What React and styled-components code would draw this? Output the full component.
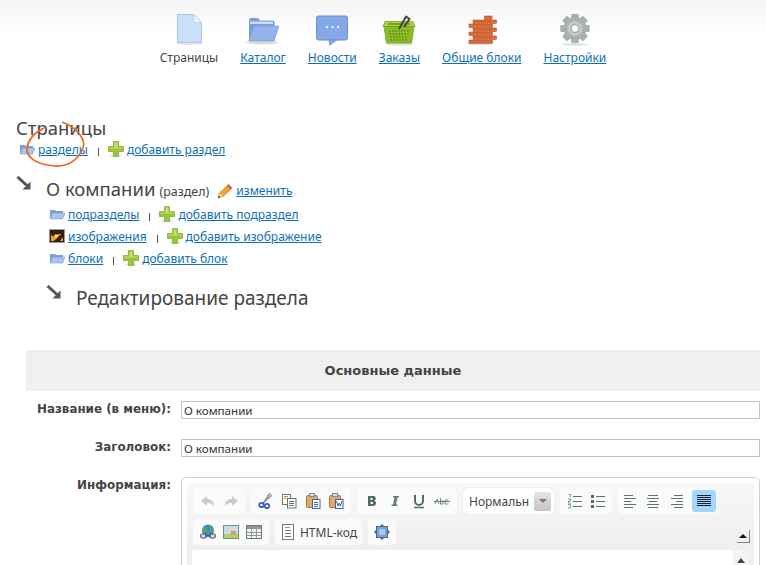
import React from 'react'
import styled, { createGlobalStyle } from 'styled-components'

const Global = createGlobalStyle`
html, body {
  margin: 0;
  padding: 0;
  background: #fff;
  height: 565px;
  overflow: hidden;
}
body {
  font-family: "Noto Sans", "Liberation Sans", sans-serif;
  font-size: 12px;
  color: #444;
}
a {
  color: #0d6fb8;
  text-decoration: underline;
}
`

const Page = styled.div`
position: relative;
width: 766px;
height: 565px;
overflow: hidden;
`

const Nav = styled.nav`
display: flex;
justify-content: center;
gap: 22px;
height: 118px;
padding-top: 12px;
box-sizing: border-box;
background: linear-gradient(#f3f3f3 0, #fff 30px);
`

const NavItem = styled.div`
display: flex;
flex-direction: column;
align-items: center;
gap: 3px;
`

const NavIcon = styled.svg`
width: 34px;
height: 34px;
`

const NavLabel = styled.a`
font-size: 12px;
line-height: 17px;
white-space: nowrap;
color: ${p => (p.$active ? '#444' : '#0d6fb8')};
text-decoration: ${p => (p.$active ? 'none' : 'underline')};
`

const Content = styled.main`
padding-left: 16px;
`

const Title = styled.h1`
margin: 0;
font-size: 18.5px;
font-weight: normal;
line-height: 20px;
color: #444;
`

const LinkRow = styled.div`
display: flex;
align-items: center;
height: 22px;
margin-left: ${p => p.$indent || 0}px;
`

const Sep = styled.span`
width: 1px;
height: 8px;
margin: 6px 9px 0 10px;
background: #456;
`

const RowIcon = styled.svg`
width: 16px;
height: 16px;
margin-right: 3px;
flex: none;
`

const PlusIcon = styled(RowIcon)`
margin-right: 3px;
`

const TreeHead = styled.div`
display: flex;
align-items: flex-start;
margin-left: ${p => p.$indent || 0}px;
margin-top: ${p => p.$top || 0}px;
`

const Arrow = styled.svg`
width: 16px;
height: 14px;
margin-right: 14px;
flex: none;
`

const HeadText = styled.h2`
margin: 3px 0 0;
font-size: ${p => p.$size}px;
font-weight: normal;
line-height: 20px;
color: #444;
white-space: nowrap;
`

const Small = styled.span`
font-size: 12.5px;
margin-left: 4px;
`

const Edit = styled.span`
display: inline-flex;
align-items: center;
font-size: 12px;
margin-left: 8px;
vertical-align: -3px;
`

const RowsBlock = styled.div`
margin-top: 1px;
`

const Form = styled.section`
margin: 42px 6px 0 10px;
`

const FormHead = styled.div`
height: 41px;
line-height: 41px;
background: #f0f0f0;
text-align: center;
font-family: "DejaVu Sans", sans-serif;
font-weight: bold;
font-size: 13px;
color: #444;
`

const FieldRow = styled.div`
display: grid;
grid-template-columns: 145px 1fr;
column-gap: 10px;
margin-top: ${p => p.$top}px;
`

const Label = styled.label`
text-align: right;
font-family: "DejaVu Sans", sans-serif;
font-weight: bold;
font-size: 11.9px;
line-height: 17px;
color: #444;
white-space: nowrap;
`

const Input = styled.div`
height: 18px;
box-sizing: border-box;
border: 1px solid #c4c4c4;
padding-left: 2px;
line-height: 18px;
font-size: 11.6px;
color: #333;
`

const Editor = styled.div`
position: relative;
height: 200px;
box-sizing: border-box;
border: 1px solid #d0d0d0;
border-radius: 5px;
padding: 5px;
`

const Toolbox = styled.div`
height: 67px;
box-sizing: border-box;
padding: 5px 6px 0;
background: linear-gradient(#f7f7f7, #efefef);
border-radius: 4px 4px 0 0;
`

const ToolRow = styled.div`
display: flex;
gap: 6px;
margin-bottom: 5px;
`

const Group = styled.div`
display: flex;
align-items: center;
justify-content: space-around;
height: 26px;
width: ${p => p.$w}px;
box-sizing: border-box;
padding: 0 3px;
background: #fbfbfb;
border-radius: 5px;
`

const AlignGroup = styled(Group)`
justify-content: space-between;
padding: 0 1px 0 4px;
`

const Combo = styled(Group)`
justify-content: space-between;
background: #fff;
padding: 0 3px 0 6px;
box-shadow: 0 0 1px #ccc;
font-size: 12px;
color: #444;
`

const ComboBtn = styled.span`
display: flex;
align-items: center;
justify-content: center;
width: 17px;
height: 19px;
background: linear-gradient(#e8e4e4, #c8c2c2);
border-radius: 2px;
&::after {
  content: '';
  border: 4px solid transparent;
  border-top: 4px solid #777;
  border-bottom: 0;
}
`

const HtmlBtn = styled.span`
font-size: 12px;
color: #444;
white-space: nowrap;
`

const Tool = styled.svg`
width: 16px;
height: 16px;
flex: none;
transform: ${p => (p.$flip ? 'scaleX(-1)' : 'none')};
`

const ActiveBtn = styled.span`
display: flex;
align-items: center;
justify-content: center;
width: 24px;
height: 22px;
background: #a3d5fd;
border-radius: 3px;
`

const Collapse = styled.span`
position: absolute;
right: 9px;
top: 52px;
width: 13px;
height: 13px;
box-sizing: border-box;
border-right: 1px solid #888;
border-bottom: 1px solid #888;
display: flex;
align-items: center;
justify-content: center;
&::after {
  content: '';
  border: 4px solid transparent;
  border-bottom: 4px solid #111;
  border-top: 0;
}
`

const Body = styled.div`
display: flex;
justify-content: flex-end;
height: 120px;
padding-left: 5px;
background: #f0f0f0;
`

const Sheet = styled.div`
flex: 1;
background: #fff;
`

const Scroll = styled.div`
width: 16px;
margin-right: 5px;
display: flex;
justify-content: center;
padding-top: 8px;
box-sizing: border-box;
background: #f4f4f4;
&::before {
  content: '';
  height: 0;
  border: 4px solid transparent;
  border-bottom: 5px solid #444;
  border-top: 0;
}
`

const Ring = styled.svg`
position: absolute;
left: 20px;
top: 115px;
width: 70px;
height: 56px;
pointer-events: none;
`

const Folder = () => (
  <RowIcon viewBox="0 0 16 16">
    <path d="M1 4 h5 l1 1 h7 v8 H1z" fill="#7d9fd6" />
    <path d="M1 13 L3.5 7 H16 L13.5 13z" fill="#a9c4ee" stroke="#7d9fd6" strokeWidth=".6" />
  </RowIcon>
)

const Plus = () => (
  <PlusIcon viewBox="0 0 16 16">
    <ellipse cx="8" cy="14.5" rx="6" ry="1.2" fill="#ddd" />
    <path d="M5.5 0.5h5v5h5v5h-5v5h-5v-5h-5v-5h5z" fill="#9bc53d" stroke="#86ad2e" strokeWidth=".8" />
    <path d="M6.5 1.5h3v5h5v1h-5h-3h-5v-1h5z" fill="#c3e070" />
  </PlusIcon>
)

const Picture = () => (
  <RowIcon viewBox="0 0 16 16">
    <rect x=".5" y="1.5" width="15" height="13" fill="#222" stroke="#999" />
    <path d="M2 3h12v10H2z" fill="#f0a020" />
    <path d="M2 3h12v3H9L6 9 2 7z" fill="#3a1c00" />
    <path d="M5 13 L10 8 L14 5 V9 L11 13z" fill="#3a1c00" />
    <circle cx="7" cy="8" r="1.800" fill="#ffe070" />
  </RowIcon>
)

const Pencil = () => (
  <RowIcon viewBox="0 0 16 16">
    <path d="M1 15 L2.5 10 L11.5 1.5 L15 5 L6 13.5z" fill="#f4a62a" stroke="#b5701a" strokeWidth=".7" />
    <path d="M1 15 L2.5 10 L6 13.5z" fill="#f3d9a8" />
    <path d="M1 15 L1.7 12.6 L3.4 14.3z" fill="#333" />
    <path d="M11.5 1.5 L15 5 L13.5 6.5 L10 3z" fill="#e2566a" />
  </RowIcon>
)

const SeArrow = () => (
  <Arrow viewBox="0 0 16 14">
    <path d="M1.5 1 L11 9.5" stroke="#555" strokeWidth="3" />
    <path d="M14.5 13.5 H6.5 L14.5 5.5z" fill="#555" />
  </Arrow>
)

const PageIcon = () => (
  <NavIcon viewBox="0 0 34 34">
    <ellipse cx="17" cy="31.5" rx="14" ry="1.5" fill="#e4e4e4" />
    <path d="M5.5 2.500 H22 L29.500 10.500 V30.500 H5.500z" fill="#c9e0f6" stroke="#a7c8ea" />
    <path d="M22 2.500 V10.500 H29.500z" fill="#eef4fb" stroke="#b8cfe6" strokeWidth=".6" />
  </NavIcon>
)

const FolderBig = () => (
  <NavIcon viewBox="0 0 34 34">
    <ellipse cx="16" cy="30.500" rx="16" ry="2" fill="#ddd" />
    <path d="M3 8 Q3 6 5 6 H12 L14 8.500 H27 Q28.500 8.500 28.500 10 V29 H3z" fill="#7a9edd" />
    <path d="M4 9.500 H27 V12 H4z" fill="#cfdcf3" />
    <path d="M3 29 L8 14 H33 L28 29z" fill="#93b3ea" stroke="#7a9edd" strokeWidth=".7" />
  </NavIcon>
)

const Chat = () => (
  <NavIcon viewBox="0 0 34 34">
    <rect x="1.500" y="4" width="31" height="24" rx="2" fill="#85a9e8" stroke="#6a8fd0" />
    <path d="M14 28 H22 L14.500 33.500z" fill="#85a9e8" stroke="#6a8fd0" strokeWidth=".6" />
    <circle cx="12" cy="15" r="1.200" fill="#e6eefb" />
    <circle cx="17.500" cy="15" r="1.200" fill="#e6eefb" />
    <circle cx="23" cy="15" r="1.200" fill="#e6eefb" />
  </NavIcon>
)

const Basket = () => (
  <NavIcon viewBox="0 0 34 34">
    <ellipse cx="17" cy="32" rx="14" ry="1.500" fill="#ddd" />
    <path d="M3 9.500 H31 L33 14.500 H1z" fill="#a6d33a" stroke="#7da522" strokeWidth=".8" />
    <path d="M6 11 H28 V13 H6z" fill="#7da522" />
    <path d="M2 14.500 H32 L29.500 31 H4.500z" fill="#8cbc28" stroke="#6f9a1c" strokeWidth=".8" />
    <path d="M7 19 H27 M7.500 22 H26.500 M8 25 H26 M8.500 28 H25.500" stroke="#5d8714" strokeWidth="1.400" strokeDasharray="1.500 1.500" />
    <path d="M17 17 L24 4.500 L27.500 7 L22 15" stroke="#444" strokeWidth="2" strokeLinejoin="round" fill="none" />
  </NavIcon>
)

const brickRows = [[19.5, 1], [8, 3], [4, 3], [8, 3], [4, 3], [8, 3], [4, 3]]

const Bricks = () => (
  <NavIcon viewBox="0 0 34 34">
    <ellipse cx="15" cy="32" rx="13" ry="1" fill="#ddd" />
    {brickRows.map(([start, count], r) =>
      Array.from({ length: count }).map((_, i) => (
        <rect key={`${r}-${i}`} x={start + i * 8} y={4 + r * 4} width="7.500" height="3.400" fill="#dd6a30" stroke="#a8431a" strokeWidth=".5" />
      ))
    )}
  </NavIcon>
)

const Gear = () => (
  <NavIcon viewBox="0 0 34 34">
    <ellipse cx="17" cy="32.500" rx="13" ry="1.200" fill="#ddd" />
    <g fill="#a9b0b0">
      {[0, 45, 90, 135, 180, 225, 270, 315].map(a => (
        <rect key={a} x="13.500" y="2" width="7" height="29" rx="1" transform={`rotate(${a} 17 16.500)`} />
      ))}
      <circle cx="17" cy="16.500" r="11.500" />
    </g>
    <circle cx="17" cy="16.500" r="7.500" fill="#c4caca" />
    <circle cx="17" cy="16.500" r="4" fill="#fff" stroke="#8f9696" />
  </NavIcon>
)

const Undo = ({ flip }) => (
  <Tool viewBox="0 0 16 16" $flip={flip}>
    <path d="M7 3 L1 8 L7 13 V10 C10 10 12 10.500 14 13 C14 8 11 6 7 6z" fill="#c6cccc" />
  </Tool>
)
const Cut = () => (
  <Tool viewBox="0 0 16 16">
    <path d="M12 0 L5.500 10" stroke="#8f979c" strokeWidth="1.600" fill="none" />
    <path d="M14 2 L6 9" stroke="#8f979c" strokeWidth="1.600" />
    <circle cx="3.500" cy="12" r="2.200" fill="none" stroke="#2f5fc0" strokeWidth="1.800" />
    <circle cx="9" cy="13" r="2.200" fill="none" stroke="#2f5fc0" strokeWidth="1.800" />
  </Tool>
)
const Copy = () => (
  <Tool viewBox="0 0 16 16">
    <rect x="1.500" y="1.500" width="8" height="10" fill="#fff" stroke="#777" />
    <rect x="6.500" y="5.500" width="8.500" height="9.500" fill="#fff" stroke="#5e7470" />
    <path d="M8 8.500h5M8 10.500h5M8 12.500h5" stroke="#5e7470" />
    <path d="M3 3.500h4M3 5.500h2" stroke="#d98b2a" />
  </Tool>
)
const Paste = ({ word }) => (
  <Tool viewBox="0 0 16 16">
    <rect x="1.500" y="2.500" width="11" height="12" rx="1" fill="#e2a866" stroke="#a9743a" />
    <rect x="4.500" y="0.500" width="5" height="3" fill="#ddd" stroke="#888" />
    <rect x="7.500" y="6.500" width="7.500" height="9" fill="#fff" stroke="#3a64c0" />
    {word ? <path d="M8.500 8 L10 13 L11.200 10 L12.400 13 L14 8" stroke="#3a64c0" fill="none" /> : <path d="M9 9.500h4M9 11.500h4M9 13.500h4" stroke="#3a64c0" />}
  </Tool>
)
const Bold = () => (
  <Tool viewBox="0 0 16 16"><path d="M4 3h5.500a2.500 2.500 0 0 1 1 4.700a2.800 2.800 0 0 1-1 5.300H4z M6.500 5v2h2v-2z M6.500 9v2h2.500v-2z" fill="#4f6b66" fillRule="evenodd" /></Tool>
)
const Italic = () => (
  <Tool viewBox="0 0 16 16"><path d="M6 3h6v1.500h-1.500L9 11.500h1.500V13H4.500v-1.500H6L7.500 4.500H6z" fill="#6a7d7a" /></Tool>
)
const Under = () => (
  <Tool viewBox="0 0 16 16"><path d="M4 2v6a4 4 0 0 0 8 0V2" fill="none" stroke="#4f6b66" strokeWidth="2" /><path d="M3 14.500h10" stroke="#4f6b66" strokeWidth="1.500" /></Tool>
)
const Strike = () => (
  <Tool viewBox="0 0 16 16">
    <path d="M0 8.500h16" stroke="#6a7d7a" />
    <path d="M1 11 L3 6 L5 11 M6.500 5V11 M6.500 8h2.500v3h-2.500 M14.500 7h-3.500v4h3.500" fill="none" strokeWidth=".9" stroke="#6a7d7a" />
  </Tool>
)
const lineSets = {
  left: [[2, 11], [2, 14], [2, 9], [2, 14], [2, 11]],
  center: [[3, 13], [2, 14], [4, 12], [2, 14], [3, 13]],
  right: [[5, 14], [2, 14], [7, 14], [2, 14], [5, 14]],
  full: [[1, 15], [1, 15], [1, 15], [1, 15], [1, 15], [1, 15]],
}
const Lines = ({ kind, color = '#5e7470' }) => (
  <Tool viewBox="0 0 16 16">
    {lineSets[kind].map(([a, b], i) => (
      <path key={i} d={`M${a} ${kind === 'full' ? 2.5 + i * 2 : 2.5 + i * 3}H${b}`} stroke={color} />
    ))}
  </Tool>
)
const Ol = () => (
  <Tool viewBox="0 0 16 16">
    <path d="M6 3.500h9M6 8.500h9M6 13.500h9" stroke="#5e7470" />
    <path d="M1.500 1.500h2v3M1 6h2.500v2h-2v2H4M1 11.500h2.500v3.500H1" stroke="#4f8f85" fill="none" strokeWidth=".8" />
  </Tool>
)
const Ul = () => (
  <Tool viewBox="0 0 16 16">
    <path d="M6 3.500h9M6 8.500h9M6 13.500h9" stroke="#5e7470" />
    <path d="M1 2h3v3H1zM1 7h3v3H1zM1 12h3v3H1z" fill="#4f6b66" />
  </Tool>
)
const Link = () => (
  <Tool viewBox="0 0 16 16">
    <circle cx="8" cy="6.500" r="6" fill="#3f88d8" />
    <path d="M4 2 Q8 5 6 8 Q3 9 2.500 6z M9 1 Q13 3 13 8 L10 7z" fill="#66a63a" />
    <rect x="0.500" y="10" width="6" height="4" rx="2" fill="#ddd" stroke="#344" />
    <rect x="9.500" y="10" width="6" height="4" rx="2" fill="#ddd" stroke="#344" />
    <path d="M5 12h6" stroke="#344" />
  </Tool>
)
const Img = () => (
  <Tool viewBox="0 0 16 16">
    <rect x=".5" y="1.500" width="15" height="13" fill="#bfe0f2" stroke="#7c8c80" />
    <path d="M1 10h14v4H1z" fill="#b5cf6c" />
    <path d="M8 7h5v4H8z" fill="#e89a4a" />
    <circle cx="5" cy="5" r="1.500" fill="#f3d65a" />
  </Tool>
)
const Table = () => (
  <Tool viewBox="0 0 16 16">
    <rect x=".5" y="1.500" width="15" height="13" fill="#f4f4f4" stroke="#6b7b78" />
    <path d="M1 2h14v3H1z" fill="#8c9a9a" />
    <path d="M1 8.500h14M1 11.500h14M5.500 5v9M10.500 5v9" stroke="#8c9a9a" />
  </Tool>
)
const Doc = () => (
  <Tool viewBox="0 0 16 16">
    <rect x="2.500" y=".5" width="11" height="15" fill="#fff" stroke="#6b7b78" />
    <path d="M5 3.500h5" stroke="#d98b2a" />
    <path d="M5 6.500h6M5 9.500h6M5 12.500h6" stroke="#6b7b78" />
  </Tool>
)
const Maximize = () => (
  <Tool viewBox="0 0 16 16">
    <path d="M8 0l2 2H6zM8 16l2-2H6zM0 8l2-2v4zM16 8l-2-2v4z" fill="#4f6b66" />
    <rect x="2.500" y="2.500" width="11" height="11" fill="#6f9df0" stroke="#4f6b66" />
    <path d="M5 5h6v6H5z" fill="#a8c8f8" />
  </Tool>
)

const Links = ({ indent, icon, link, add }) => (
  <LinkRow $indent={indent}>
    {icon}
    <a href="#">{link}</a>
    <Sep />
    <Plus />
    <a href="#">{add}</a>
  </LinkRow>
)

export default function App() {
  return (
    <Page>
      <Global />
      <Nav>
        <NavItem><PageIcon /><NavLabel $active>Страницы</NavLabel></NavItem>
        <NavItem><FolderBig /><NavLabel href="#">Каталог</NavLabel></NavItem>
        <NavItem><Chat /><NavLabel href="#">Новости</NavLabel></NavItem>
        <NavItem><Basket /><NavLabel href="#">Заказы</NavLabel></NavItem>
        <NavItem><Bricks /><NavLabel href="#">Общие блоки</NavLabel></NavItem>
        <NavItem><Gear /><NavLabel href="#">Настройки</NavLabel></NavItem>
      </Nav>
      <Content>
        <Title>Страницы</Title>
        <Links indent={3} icon={<Folder />} link="разделы" add="добавить раздел" />
        <TreeHead $top={16}>
          <SeArrow />
          <HeadText $size={18.5}>О компании<Small>(раздел)</Small><Edit><Pencil /><a href="#">изменить</a></Edit></HeadText>
        </TreeHead>
        <RowsBlock>
          <Links indent={33} icon={<Folder />} link="подразделы" add="добавить подраздел" />
          <Links indent={33} icon={<Picture />} link="изображения" add="добавить изображение" />
          <Links indent={33} icon={<Folder />} link="блоки" add="добавить блок" />
        </RowsBlock>
        <TreeHead $indent={30} $top={16}>
          <SeArrow />
          <HeadText $size={19}>Редактирование раздела</HeadText>
        </TreeHead>
        <Form>
          <FormHead>Основные данные</FormHead>
          <FieldRow $top={10}><Label>Название (в меню):</Label><Input>О компании</Input></FieldRow>
          <FieldRow $top={20}><Label>Заголовок:</Label><Input>О компании</Input></FieldRow>
          <FieldRow $top={20}>
            <Label>Информация:</Label>
            <Editor>
              <Toolbox>
                <ToolRow>
                  <Group $w={52}><Undo /><Undo flip /></Group>
                  <Group $w={100}><Cut /><Copy /><Paste /><Paste word /></Group>
                  <Group $w={100}><Bold /><Italic /><Under /><Strike /></Group>
                  <Combo $w={91}>Нормальн<ComboBtn /></Combo>
                  <Group $w={52}><Ol /><Ul /></Group>
                  <AlignGroup $w={99}><Lines kind="left" /><Lines kind="center" /><Lines kind="right" /><ActiveBtn><Lines kind="full" color="#123" /></ActiveBtn></AlignGroup>
                </ToolRow>
                <ToolRow>
                  <Group $w={76}><Link /><Img /><Table /></Group>
                  <Group $w={87}><Doc /><HtmlBtn>HTML-код</HtmlBtn></Group>
                  <Group $w={28}><Maximize /></Group>
                </ToolRow>
              </Toolbox>
              <Collapse />
              <Body><Sheet /><Scroll /></Body>
            </Editor>
          </FieldRow>
        </Form>
      </Content>
      <Ring viewBox="0 0 70 56">
        <path d="M42 7 C58 13 66 25 63 33 C58 45 48 52 35 51 C18 50 6 43 7 33 C8 25 14 18 24 13" fill="none" stroke="#f0641e" strokeWidth="1.700" />
      </Ring>
    </Page>
  )
}
